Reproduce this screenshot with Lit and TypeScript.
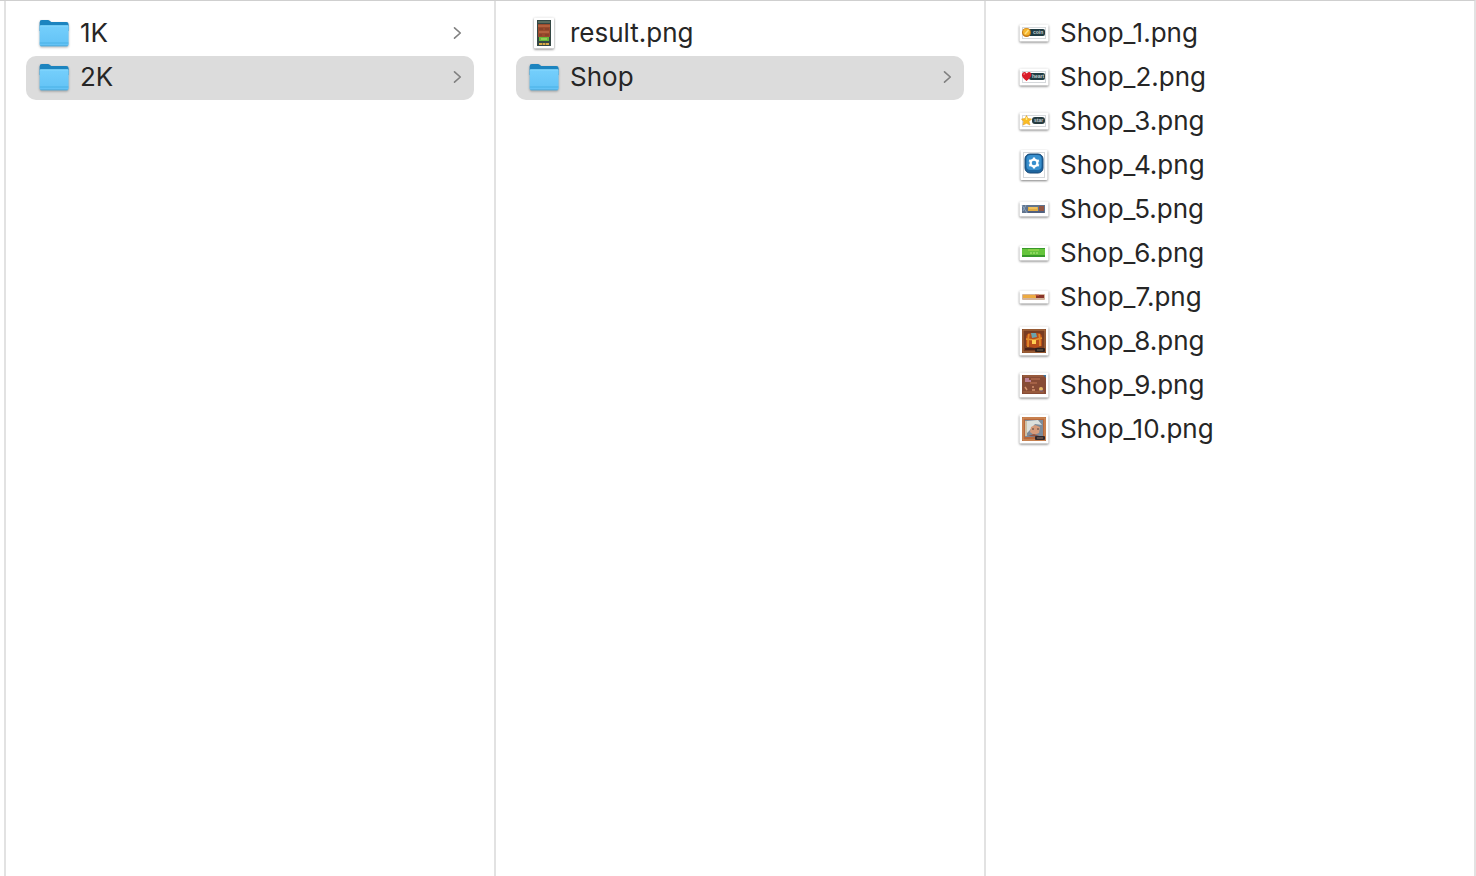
import { LitElement, html, css, svg, nothing } from "lit";
import { customElement, property, state } from "lit/decorators.js";

type Entry = { name: string; icon: string; folder?: boolean };

const COLUMNS: { label: string; entries: Entry[] }[] = [
  {
    label: "Resolutions",
    entries: [
      { name: "1K", icon: "folder", folder: true },
      { name: "2K", icon: "folder", folder: true },
    ],
  },
  {
    label: "2K",
    entries: [
      { name: "result.png", icon: "result" },
      { name: "Shop", icon: "folder", folder: true },
    ],
  },
  {
    label: "Shop",
    entries: ["coin", "heart", "star", "gear", "panel", "green", "bar", "chest", "board", "portrait"].map(
      (icon, i) => ({ name: `Shop_${i + 1}.png`, icon }),
    ),
  },
];

// White paper frame behind every image preview, centred in the 32px icon box.
const frame = (w: number, h: number) => svg`
  <rect class="paper" x=${16 - w / 2} y=${16 - h / 2} width=${w} height=${h} rx="1"></rect>`;

const ART: Record<string, unknown> = {
  folder: svg`
    <g class="shadow">
      <path d="M1.600 5.400Q1.600 3 3.800 3H9.800Q11 3 12 4L13.200 5H28.400Q30.600 5 30.600 7.200V14H1.600Z" fill="#1c84bf"/>
      <path d="M1.600 9.600Q1.600 8.400 2.800 8.400H29.400Q30.600 8.400 30.600 9.600V27.400Q30.600 29.200 28.800 29.200H3.400Q1.600 29.200 1.600 27.400Z" fill="url(#front)"/>
      <path d="M2.200 8.900H30" stroke="#8bdcff" stroke-width="1"/>
      <path d="M1.800 26H30.400" stroke="#4bb2e6" stroke-width="1"/>
      <path d="M2.400 28.800H29.800" stroke="#4ba6d4" stroke-width=".8"/>
    </g>`,
  result: svg`${frame(20, 31)}
    <rect x="9" y="3" width="14" height="26" fill="#344744"/>
    <rect x="10" y="4" width="12" height="2" fill="#596c5f"/>
    <rect x="10" y="7" width="12" height="13" fill="#9a4a2c"/>
    <path d="M10 9H22M11 15H21" stroke="#cc7850" stroke-width="1"/>
    <path d="M11 12H15M17 12H21M11 18H14M17 18H21" stroke="#84402a" stroke-width="1.500"/>
    <rect x="11" y="20" width="10" height="4" fill="#67b83a"/>
    <path d="M13 22H19" stroke="#bae66e" stroke-width="1"/>
    <path d="M11 27H21" stroke="#d8aa45" stroke-width="2" stroke-dasharray="3 .500"/>`,
  coin: svg`${frame(29, 17)}
    <rect class="edge" x="4.500" y="10.500" width="23" height="11"/>
    <rect x="10" y="12" width="17" height="7" rx="2" fill="#203c43"/>
    <circle cx="8.500" cy="15.500" r="4.500" fill="#c47816"/>
    <circle cx="8.500" cy="15" r="3.500" fill="#f5b52e"/>
    <path d="M7 17L10.500 13" stroke="#ffe184" stroke-width="1.500"/>
    <text x="15" y="17">coin</text>`,
  heart: svg`${frame(29, 17)}
    <rect class="edge" x="4.500" y="10.500" width="23" height="11"/>
    <rect x="11" y="12" width="16" height="7" rx="2" fill="#203c43"/>
    <path d="M8.500 20Q3 16 4 13Q6 9.500 8.700 12.500Q12 9.500 13.400 13Q14 16 8.500 20Z" fill="#d91d2a"/>
    <path d="M5.500 13.500L7 12.500" stroke="#ff7880" stroke-width="1.200"/>
    <text x="14" y="17">heart</text>`,
  star: svg`${frame(29, 17)}
    <rect class="edge" x="4.500" y="10.500" width="23" height="11"/>
    <rect x="14" y="12" width="13" height="7" rx="3" fill="#263b40"/>
    <path d="M8.500 10.500L10 13.500L13.500 14L11 16.500L12 20L8.500 18.300L5 20L5.600 16.500L3.500 14L7 13.500Z" fill="#f9bd24" stroke="#e5a126" stroke-width=".6" stroke-linejoin="round"/>
    <path d="M8.500 12V15" stroke="#ffed83" stroke-width="1.500"/>
    <text x="16" y="17">star</text>`,
  gear: svg`${frame(27, 30)}
    <rect class="edge" x="5.500" y="3.500" width="21" height="25"/>
    <rect x="7" y="5" width="18" height="19" rx="5" fill="#1d659f" stroke="#164877" stroke-width="1"/>
    <rect x="8.500" y="6" width="15" height="15" rx="4" fill="#388fcd"/>
    <circle cx="16" cy="14" r="3.400" stroke="#fff" stroke-width="2.200"/>
    <path d="M16 8.500V11M16 17V19.500M11.200 11.200L13.400 12.500M18.600 15.500L20.800 16.800M11.200 16.800L13.400 15.500M18.600 12.500L20.800 11.200" stroke="#fff" stroke-width="2.200"/>`,
  panel: svg`${frame(29, 15)}
    <rect x="4" y="12" width="23" height="8" fill="#61748d"/>
    <path d="M4 12L9 20M8 12L5 18" stroke="#8aa2bd" stroke-width="1"/>
    <rect x="10" y="14" width="10" height="4" fill="#e1ac43"/>
    <path d="M11 15H19" stroke="#ffd477" stroke-width="1"/>
    <rect x="21" y="13" width="5" height="5" fill="#945744"/>
    <path d="M10 19H26" stroke="#424d72" stroke-width="1"/>`,
  green: svg`${frame(29, 15)}
    <rect x="4" y="11" width="23" height="9" fill="#38992a"/>
    <rect x="4" y="12" width="23" height="6" fill="#65c43c"/>
    <path d="M10 13H21" stroke="#aadc55" stroke-width="1"/>
    <path d="M12 16H20" stroke="#b4e783" stroke-width="1.200" stroke-dasharray="2 1"/>`,
  bar: svg`${frame(29, 13)}
    <rect x="4" y="13" width="23" height="6" rx="1" fill="#d3b49c"/>
    <rect x="5" y="14" width="13" height="3" fill="#edaa40"/>
    <rect x="18" y="14" width="8" height="3" fill="#8a3429"/>
    <path d="M17 14H21" stroke="#d5775d" stroke-width="1"/>`,
  chest: svg`${frame(29, 29)}
    <rect x="4" y="4" width="24" height="24" fill="#783d22"/>
    <rect x="5" y="5" width="22" height="22" stroke="#b57845" stroke-width="1"/>
    <path d="M8 13Q8 8 13 8H20Q24 8 24 13V21L17 23L8 21Z" fill="#b84e1a"/>
    <path d="M8 14L16 15L24 13" stroke="#e49832" stroke-width="1.600"/>
    <path d="M11 9Q10 12 10 22M21 9Q22 12 22 21" stroke="#e08a2c" stroke-width="1.800"/>
    <path d="M13 8L18 8L19 12L14 13Z" fill="#6aa3ae"/>
    <rect x="14" y="15" width="4" height="4" fill="#ffce52"/>
    <path d="M7 24H18" stroke="#4b2419" stroke-width="2"/>
    <rect x="17" y="23" width="10" height="4" rx="1" fill="#2d211f"/>
    <path d="M19 25H25" stroke="#776652" stroke-width="1"/>`,
  board: svg`${frame(29, 25)}
    <rect x="4" y="6" width="24" height="19" fill="#874b35"/>
    <path d="M5 7H26M5 23H26" stroke="#a86a45" stroke-width="1"/>
    <path d="M7 9H11V11H13V13H7Z" fill="#bc8093"/>
    <path d="M13 10H22M12 14H19" stroke="#c27957" stroke-width="1"/>
    <path d="M7 18L9 21M14 18H16M14 21H17" stroke="#d4926e" stroke-width="1.500"/>
    <circle cx="23" cy="20" r="2" fill="#e6b866"/>
    <path d="M25 6H28V9" fill="#41739b"/>
    <path d="M22 22H25" stroke="#6a5884" stroke-width="1"/>`,
  portrait: svg`${frame(29, 29)}
    <rect x="4" y="4" width="24" height="24" fill="#b8683c"/>
    <rect x="5" y="5" width="22" height="22" stroke="#d89a63" stroke-width="1"/>
    <rect x="7" y="7" width="18" height="17" fill="#7d8b9a"/>
    <path d="M9 8L20 7L24 12L17 11L12 17L9 20Z" fill="#dce0dc"/>
    <path d="M13 14L17 12L22 14L21 20L16 22L12 19Z" fill="#d69b7a"/>
    <path d="M14 16H16M19 16H21" stroke="#554441" stroke-width="1"/>
    <path d="M8 8V23" stroke="#e8d1a7" stroke-width="1.500"/>
    <path d="M10 23L16 21L24 24" fill="#925341"/>
    <rect x="17" y="23" width="10" height="4" rx="1" fill="#30282b"/>
    <path d="M19 25H25" stroke="#8b7165" stroke-width="1"/>`,
};

@customElement("entry-icon")
export class EntryIcon extends LitElement {
  @property() kind = "folder";

  static styles = css`
    :host {
      display: block;
      flex: none;
      width: 32px;
      height: 32px;
    }
    svg {
      display: block;
      overflow: visible;
    }
    .shadow {
      filter: drop-shadow(0 1px 1px rgba(0, 0, 0, 0.3));
    }
    .paper {
      fill: #fff;
      filter: drop-shadow(0 1px 1px rgba(0, 0, 0, 0.5));
    }
    .edge {
      fill: #fff;
      stroke: #d5d8db;
    }
    text {
      fill: #c4d0d2;
      font: 700 5px "Liberation Sans", sans-serif;
    }
  `;

  render() {
    return html`<svg width="32" height="32" viewBox="0 0 32 32" fill="none" aria-hidden="true">
      <defs>
        <linearGradient id="front" x2="0" y2="1">
          <stop offset="0" stop-color="#75cffc" />
          <stop offset="1" stop-color="#62c2f5" />
        </linearGradient>
      </defs>
      ${ART[this.kind]}
    </svg>`;
  }
}

@customElement("app-root")
export class AppRoot extends LitElement {
  @state() private selected = ["2K", "Shop", ""];

  static styles = css`
    :host {
      display: block;
      font-family: Inter, "Noto Sans", sans-serif;
      color: #262626;
      background: #fff;
    }
    .browser {
      box-sizing: border-box;
      display: grid;
      grid-template-columns: repeat(3, minmax(0, 1fr));
      min-height: 100vh;
      padding-left: 4px;
      border-top: 1px solid #cfcfcf;
      border-right: 2px solid #e2e2e2;
    }
    .column {
      border-left: 2px solid #e2e2e2;
      padding: 11px 20px;
    }
    .list {
      list-style: none;
      margin: 0;
      padding: 0;
    }
    .entry {
      display: flex;
      align-items: center;
      gap: 10px;
      box-sizing: border-box;
      width: 100%;
      height: 44px;
      margin: 0;
      padding: 0 12px 2px;
      border: 0;
      border-radius: 10px;
      background: none;
      color: inherit;
      font: inherit;
      font-size: 26px;
      line-height: 32px;
      text-align: left;
    }
    .entry[aria-pressed="true"] {
      background: #dcdcdc;
    }
    .name {
      flex: 1;
      min-width: 0;
      overflow: hidden;
      text-overflow: ellipsis;
      white-space: nowrap;
    }
    .chevron {
      flex: none;
      display: block;
    }
  `;

  private select(column: number, name: string) {
    this.selected = this.selected.map((s, i) => (i === column ? name : s));
  }

  render() {
    return html`<main class="browser">
      ${COLUMNS.map(
        (column, c) => html`<nav class="column" aria-label=${column.label}>
          <ul class="list">
            ${column.entries.map(
              (entry) => html`<li>
                <button
                  class="entry"
                  type="button"
                  aria-pressed=${this.selected[c] === entry.name ? "true" : "false"}
                  @click=${() => this.select(c, entry.name)}
                >
                  <entry-icon .kind=${entry.icon}></entry-icon>
                  <span class="name">${entry.name}</span>
                  ${entry.folder
                    ? html`<svg class="chevron" width="10" height="16" viewBox="0 0 10 16" fill="none" aria-hidden="true">
                        <path d="M2.500 2.800L8.300 8L2.500 13.200" stroke="#808080" stroke-width="1.600" stroke-linecap="round" stroke-linejoin="round" />
                      </svg>`
                    : nothing}
                </button>
              </li>`,
            )}
          </ul>
        </nav>`,
      )}
    </main>`;
  }
}
